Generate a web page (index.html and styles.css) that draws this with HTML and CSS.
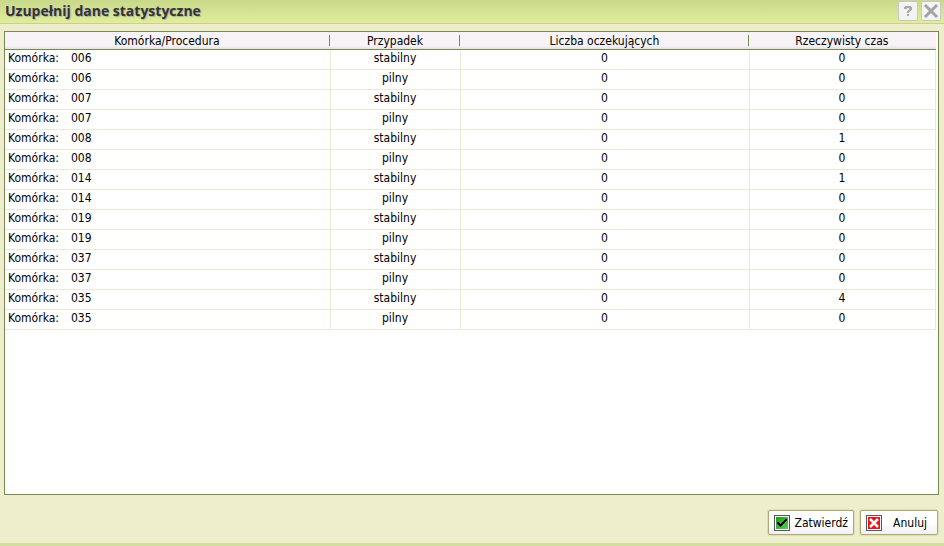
FILE: index.html
```html
<!doctype html>
<html lang="pl">
  <head>
    <title>Uzupełnij dane statystyczne</title>
    <meta charset="UTF-8" />
    <meta name="viewport" content="width=device-width, initial-scale=1" />
    <link rel="stylesheet" href="styles.css">
  </head>

  <body>
    <div class="window">
      <header class="title-bar">
        <h1>Uzupełnij dane statystyczne</h1>
        <div class="window-buttons">
          <button type="button" class="icon-button" aria-label="Pomoc">
            <svg width="16" height="16" viewBox="0 0 16 16" shape-rendering="crispEdges">
              <path d="M5 3h6v1h1v3h-1v1h-1v1H9v1H7V8h1V7h1V5H7v1H4V4h1zM7 11h2v2H7z" fill="#a9a9a9" />
            </svg>
          </button>
          <button type="button" class="icon-button" aria-label="Zamknij">
            <svg width="16" height="16" viewBox="0 0 16 16">
              <path d="M2 2L14 14M14 2L2 14" stroke="#a3a3a3" stroke-width="3" />
            </svg>
          </button>
        </div>
      </header>

      <main class="content">
        <div class="grid-frame">
          <table>
            <colgroup>
              <col class="col-unit" />
              <col class="col-case" />
              <col class="col-waiting" />
              <col class="col-time" />
            </colgroup>
            <thead>
              <tr>
                <th>Komórka/Procedura</th>
                <th>Przypadek</th>
                <th>Liczba oczekujących</th>
                <th>Rzeczywisty czas</th>
              </tr>
            </thead>
            <tbody>
              <tr><td><span class="label">Komórka:</span>006</td><td>stabilny</td><td>0</td><td>0</td></tr>
              <tr><td><span class="label">Komórka:</span>006</td><td>pilny</td><td>0</td><td>0</td></tr>
              <tr><td><span class="label">Komórka:</span>007</td><td>stabilny</td><td>0</td><td>0</td></tr>
              <tr><td><span class="label">Komórka:</span>007</td><td>pilny</td><td>0</td><td>0</td></tr>
              <tr><td><span class="label">Komórka:</span>008</td><td>stabilny</td><td>0</td><td>1</td></tr>
              <tr><td><span class="label">Komórka:</span>008</td><td>pilny</td><td>0</td><td>0</td></tr>
              <tr><td><span class="label">Komórka:</span>014</td><td>stabilny</td><td>0</td><td>1</td></tr>
              <tr><td><span class="label">Komórka:</span>014</td><td>pilny</td><td>0</td><td>0</td></tr>
              <tr><td><span class="label">Komórka:</span>019</td><td>stabilny</td><td>0</td><td>0</td></tr>
              <tr><td><span class="label">Komórka:</span>019</td><td>pilny</td><td>0</td><td>0</td></tr>
              <tr><td><span class="label">Komórka:</span>037</td><td>stabilny</td><td>0</td><td>0</td></tr>
              <tr><td><span class="label">Komórka:</span>037</td><td>pilny</td><td>0</td><td>0</td></tr>
              <tr><td><span class="label">Komórka:</span>035</td><td>stabilny</td><td>0</td><td>4</td></tr>
              <tr><td><span class="label">Komórka:</span>035</td><td>pilny</td><td>0</td><td>0</td></tr>
            </tbody>
          </table>
        </div>
      </main>

      <footer class="actions">
        <button type="button" class="action-button confirm">
          <svg width="16" height="16" viewBox="0 0 16 16" shape-rendering="crispEdges">
            <defs>
              <linearGradient id="green" x1="0" y1="0" x2="1" y2="1">
                <stop offset="0" stop-color="#1f9a1f" />
                <stop offset="1" stop-color="#4fd04f" />
              </linearGradient>
            </defs>
            <rect x="0.5" y="0.5" width="15" height="15" fill="#fff" stroke="#555" />
            <rect x="2" y="2" width="12" height="12" fill="url(#green)" />
            <path d="M3 7h2v1h1v1h1V8h1V7h1V6h1V5h1V4h2v2h-1v1h-1v1h-1v1H9v1H8v1H7v1H6v-1H5v-1H4V9H3z" fill="#000" />
          </svg>
          <span>Zatwierdź</span>
        </button>
        <button type="button" class="action-button cancel">
          <svg width="16" height="16" viewBox="0 0 16 16">
            <rect x="0.5" y="0.5" width="15" height="15" fill="#fff" stroke="#555" />
            <rect x="2" y="2" width="12" height="12" fill="#e81414" />
            <path d="M4 4L12 12M12 4L4 12" stroke="#fff" stroke-width="2.500" />
          </svg>
          <span>Anuluj</span>
        </button>
      </footer>
    </div>
  </body>
</html>
```
FILE: styles.css
```css
* {
  box-sizing: border-box;
}

body {
  margin: 0;
  font-family: 'DejaVu Sans Condensed', 'DejaVu Sans', sans-serif;
  font-size: 12px;
  color: #000000;
}

.window {
  display: flex;
  flex-direction: column;
  min-height: 100vh;
  background: linear-gradient(#d3dda0, #d3dda0) bottom / 100% 3px no-repeat, #eeeecc;
}

.title-bar {
  display: flex;
  justify-content: space-between;
  align-items: flex-start;
  height: 24px;
  padding: 1px 3px 0 5px;
  background: linear-gradient(#c9d98b, #dfee99);
  border-bottom: 1px solid #cccc99;
}

.title-bar h1 {
  margin: 0;
  font-family: 'Open Sans', 'Noto Sans', sans-serif;
  font-size: 14px;
  font-weight: 700;
  line-height: 20px;
  color: #333333;
  text-shadow: 1px 1px 1px #aaaaaa;
}

.window-buttons {
  display: flex;
  gap: 3px;
}

.icon-button {
  display: flex;
  justify-content: center;
  align-items: center;
  width: 20px;
  height: 20px;
  padding: 0;
  background-color: #f3f3f3;
  border: 1px solid #c8c8c8;
  border-radius: 2px;
}

.content {
  display: flex;
  flex: 1;
  padding: 7px 5px 0 4px;
}

.grid-frame {
  flex: 1;
  padding-right: 2px;
  background-color: #ffffff;
  border: 1px solid #778855;
}

table {
  width: 100%;
  table-layout: fixed;
  border-collapse: separate;
  border-spacing: 0;
}

.col-unit {
  width: 35%;
}

.col-case {
  width: 14%;
}

.col-waiting {
  width: 31%;
}

.col-time {
  width: 20%;
}

th {
  height: 18px;
  padding: 0 2px 0 0;
  font-weight: normal;
  line-height: 16px;
  background: linear-gradient(#778855, #778855) right 1px top 3px / 1px 11px no-repeat,
    linear-gradient(#f7f3f7 80%, #e4e2e4);
  border-bottom: 1px solid #778855;
}

th:last-child {
  background: linear-gradient(#f7f3f7 80%, #e4e2e4);
}

td {
  height: 20px;
  padding: 0 1px 2px 0;
  line-height: 17px;
  text-align: center;
  border-right: 1px solid #ece9d8;
  border-bottom: 1px solid #ece9d8;
}

td:first-child {
  padding-left: 3px;
  text-align: left;
}

.label {
  display: inline-block;
  width: 63px;
}

.actions {
  display: flex;
  justify-content: flex-end;
  gap: 6px;
  padding: 15px 6px 11px;
}

.action-button {
  display: flex;
  justify-content: space-between;
  align-items: center;
  gap: 5px;
  height: 25px;
  min-width: 78px;
  padding: 0 5px;
  font: inherit;
  color: #000000;
  background: linear-gradient(#ffffff 50%, #f2f0f2);
  border: 1px solid #aaaa77;
  border-radius: 2px;
  box-shadow: 0 0 0 1px #dddfb4;
}

.cancel {
  padding-right: 10px;
}
```
